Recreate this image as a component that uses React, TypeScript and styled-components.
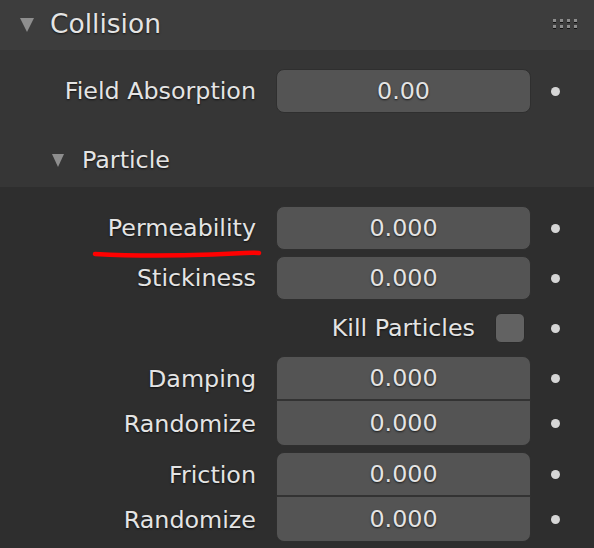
import React from 'react';
import styled, { createGlobalStyle } from 'styled-components';

const GlobalStyle = createGlobalStyle`
  html, body {
    margin: 0;
    padding: 0;
    background: #2e2e2e;
  }
  body {
    font-family: "DejaVu Sans", "Liberation Sans", sans-serif;
  }
`;

const Panel = styled.div`
  width: 594px;
  height: 548px;
  overflow: hidden;
  display: flex;
  flex-direction: column;
  background: #2e2e2e;
  color: #e4e4e4;
  font-size: 23.8px;
  text-shadow: 0 1px 2px rgba(0, 0, 0, 0.7);
`;

// -- Panel header
const Header = styled.div`
  height: 50px;
  flex-shrink: 0;
  background: #3d3d3d;
  display: flex;
  align-items: center;
  padding: 0 0 0 20px;
  gap: 16px;
  box-sizing: border-box;
`;

const Title = styled.span`
  flex: 1;
  font-size: 26.5px;
  line-height: 1;
  margin-top: -1px;
`;

const Triangle = styled.span<{ $size: number }>`
  width: 0;
  height: 0;
  border-left: ${({ $size }) => $size / 2}px solid transparent;
  border-right: ${({ $size }) => $size / 2}px solid transparent;
  border-top: ${({ $size }) => $size}px solid #8e8e8e;
  flex-shrink: 0;
`;

const Grip = styled.div`
  display: grid;
  grid-template-columns: repeat(4, 3px);
  grid-auto-rows: 3px;
  column-gap: 4px;
  row-gap: 3px;
  margin-right: 17px;
  margin-top: -3px;

  span {
    background: #8c8c8c;
    box-shadow: 0 1px 0 #111;
  }
`;

const CollisionBody = styled.div`
  background: #363636;
  padding-top: 19px;
  display: flex;
  flex-direction: column;
`;

const SubHeader = styled.div`
  height: 54px;
  padding: 20px 0 0 52px;
  display: flex;
  align-items: center;
  gap: 18px;
`;

const ParticleBody = styled.div`
  padding-top: 19px;
  display: flex;
  flex-direction: column;
  gap: 6px;
`;

// -- Property rows
const Row = styled.div<{ $h?: number }>`
  display: grid;
  grid-template-columns: 276px 255px 49px;
  height: ${({ $h }) => $h ?? 44}px;
  align-items: center;
`;

const Label = styled.span`
  position: relative;
  text-align: right;
  padding-right: 20px;
  white-space: nowrap;
`;

const Underline = styled.svg`
  position: absolute;
  left: 92px;
  top: 34px;
  width: 170px;
  height: 12px;
  overflow: visible;
`;

const Field = styled.div<{ $pos?: 'single' | 'top' | 'bottom' }>`
  height: 100%;
  box-sizing: border-box;
  background: #545454;
  border: 1px solid #2f2f2f;
  border-radius: ${({ $pos }) =>
    $pos === 'top' ? '8px 8px 0 0' : $pos === 'bottom' ? '0 0 8px 8px' : '8px'};
  ${({ $pos }) => ($pos === 'top' ? 'border-bottom: 2px solid #333;' : '')}
  ${({ $pos }) => ($pos === 'bottom' ? 'border-top: 0;' : '')}
  display: flex;
  align-items: center;
  justify-content: center;
`;

const Dot = styled.span`
  justify-self: center;
  width: 9px;
  height: 9px;
  border-radius: 50%;
  background: #d6d6d6;
`;

const CheckRow = styled.div`
  display: grid;
  grid-template-columns: 531px 49px;
  height: 44px;
  align-items: center;
`;

const CheckCell = styled.div`
  display: flex;
  align-items: center;
  justify-content: flex-end;
  gap: 20px;
  padding-right: 6px;
`;

const Checkbox = styled.span`
  width: 30px;
  height: 30px;
  box-sizing: border-box;
  background: #626262;
  border: 1px solid #2a2a2a;
  border-radius: 6px;
`;

const Group = styled.div`
  display: flex;
  flex-direction: column;
`;

const Prop = ({ label, value, pos, h, mark }: {
  label: string; value: string; pos?: 'single' | 'top' | 'bottom'; h?: number; mark?: boolean;
}) => (
  <Row $h={h}>
    <Label>
      {label}
      {mark && (
        <Underline viewBox="0 0 170 12">
          <path d="M3 6 C 40 8, 80 8, 120 6.5 S 160 4, 167 5" stroke="#ff0000" strokeWidth="4.5"
            strokeLinecap="round" fill="none" />
        </Underline>
      )}
    </Label>
    <Field $pos={pos}>{value}</Field>
    <Dot />
  </Row>
);

export default function App() {
  return (
    <>
      <GlobalStyle />
      <Panel>
        <Header>
          <Triangle $size={14} />
          <Title>Collision</Title>
          <Grip>
            {Array.from({ length: 8 }).map((_, i) => <span key={i} />)}
          </Grip>
        </Header>
        <CollisionBody>
          <Prop label="Field Absorption" value="0.00" />
          <SubHeader>
            <Triangle $size={13} />
            <span>Particle</span>
          </SubHeader>
        </CollisionBody>
        <ParticleBody>
          <Prop label="Permeability" value="0.000" mark />
          <Prop label="Stickiness" value="0.000" />
          <CheckRow>
            <CheckCell>
              <span>Kill Particles</span>
              <Checkbox />
            </CheckCell>
            <Dot />
          </CheckRow>
          <Group>
            <Prop label="Damping" value="0.000" pos="top" h={45} />
            <Prop label="Randomize" value="0.000" pos="bottom" h={45} />
          </Group>
          <Group>
            <Prop label="Friction" value="0.000" pos="top" h={45} />
            <Prop label="Randomize" value="0.000" pos="bottom" h={45} />
          </Group>
        </ParticleBody>
      </Panel>
    </>
  );
}
